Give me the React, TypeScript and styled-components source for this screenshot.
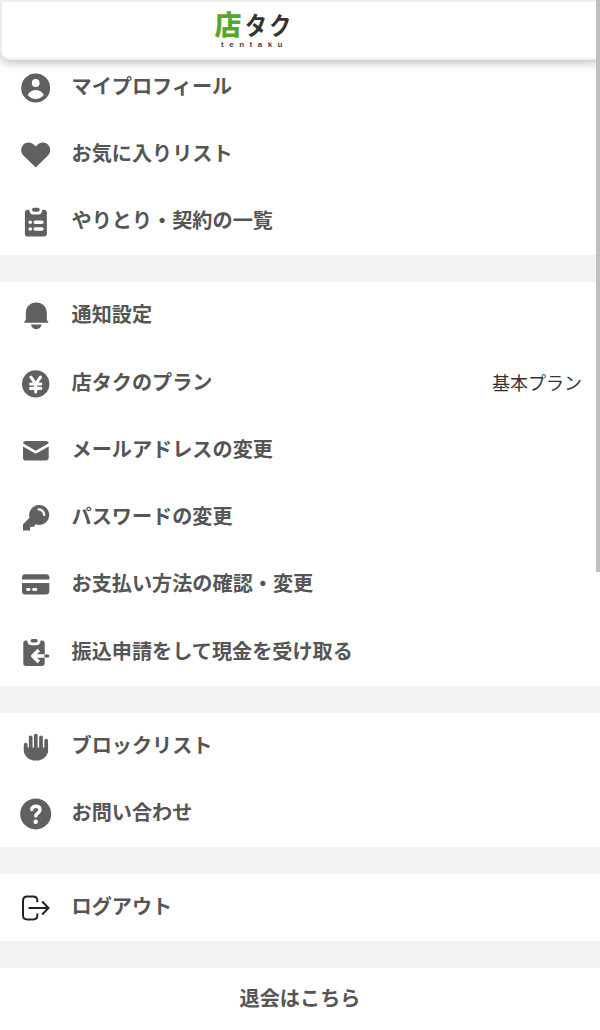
import React from "react";
import styled, { createGlobalStyle } from "styled-components";

const GlobalStyle = createGlobalStyle`
  * { box-sizing: border-box; }
  html, body { margin: 0; height: 1030px; overflow: hidden; background: #fff; }
  body { font-family: "Noto Sans CJK JP", sans-serif; color: #555; }
`;

const Screen = styled.div`
  position: relative;
  width: 600px;
  height: 1030px;
  overflow: hidden;
  display: flex;
  flex-direction: column;
  background: #f2f2f2;
`;

const Header = styled.header`
  position: relative;
  z-index: 1;
  flex: none;
  height: 60px;
  display: flex;
  flex-direction: column;
  align-items: center;
  padding: 8px 97px 0 0;
  background: #fff;
  border: 2px solid #eee;
  border-right: 0;
  border-radius: 0 0 0 9px;
  box-shadow: 0 3px 10px rgba(0, 0, 0, 0.25);
`;

const LogoMark = styled.div`
  display: flex;
  align-items: center;
  width: 76px;
  height: 28px;
  font-weight: 700;
  line-height: 28px;
`;

const LogoKanji = styled.span`
  color: #55a630;
  font-size: 27px;
  font-weight: 900;
`;

const LogoKana = styled.span`
  margin-left: 3px;
  color: #333;
  font-size: 25px;
  letter-spacing: 2.5px;
  white-space: nowrap;
  transform: scaleX(0.88);
  transform-origin: 0 50%;
`;

const LogoLatin = styled.div`
  height: 10px;
  margin-top: 2px;
  padding-left: 4px;
  color: #444;
  font: 700 8px/10px "Liberation Sans", sans-serif;
  letter-spacing: 5.5px;
`;

const Group = styled.section<{ $first?: boolean }>`
  flex: none;
  display: flex;
  flex-direction: column;
  margin-top: ${(p) => (p.$first ? "-6.3px" : "0")};
  margin-bottom: 26.95px;
  background: #fff;
`;

const Row = styled.div`
  display: flex;
  align-items: center;
  height: 67.22px;
  padding: 1px 18px 0 20px;
`;

const Icon = styled.svg`
  flex: none;
  width: 32px;
  height: 32px;
  margin-right: 19.5px;
  color: #606060;
  fill: currentColor;
`;

const Label = styled.span`
  flex: 1;
  padding-bottom: 4px;
  font-size: 20.15px;
  font-weight: 700;
  line-height: 28px;
  white-space: nowrap;
`;

const Value = styled.span`
  padding-bottom: 4px;
  color: #333;
  font-size: 18px;
  line-height: 26px;
`;

const Withdraw = styled.div`
  flex: 1;
  display: flex;
  justify-content: center;
  padding-top: 15.5px;
  background: #fff;
  font-size: 20.15px;
  font-weight: 700;
  line-height: 28px;
`;

const ScrollThumb = styled.div`
  position: absolute;
  z-index: 2;
  top: 0;
  right: 0;
  width: 4.5px;
  height: 571.5px;
  background: #bfbfbf;
`;

const white = { fill: "none", stroke: "#fff", strokeLinecap: "round", strokeLinejoin: "round" } as const;

const icons = {
  profile: (
    <>
      <circle cx="15.7" cy="15.9" r="14.5" />
      <circle cx="15.7" cy="11" r="3.9" fill="#fff" />
      <path d="M7.6 23.1c1.8-3.600 4.800-5.200 8.100-5.200s6.300 1.600 8.100 5.200c-2.200 2.500-5 3.900-8.100 3.900s-5.900-1.400-8.100-3.900z" fill="#fff" />
    </>
  ),
  heart: <path d="M15.7 28.600 3.7 16.800C.2 13.300.6 8.500 3.300 5.700c3.300-3.200 8.700-2.900 12.400 1.700 3.700-4.600 9.100-4.900 12.400-1.700 2.700 2.800 3.100 7.600-.4 11.100z" />,
  clipboard: (
    <>
      <path d="M7.500 3.700h1.800c.2 3 1.500 4.800 3.600 4.800h5.800c2.100 0 3.400-1.800 3.600-4.800h1.800c1.600 0 2.800 1.200 2.800 2.800v21.200c0 1.600-1.200 2.800-2.800 2.800H7.700A2.800 2.800 0 0 1 4.900 27.700V6.500c0-1.600 1-2.800 2.600-2.800z" />
      <rect x="12" y="1.7" width="7.7" height="4" rx="2" />
      <path d="M10.200 16.300h.1M15.200 16.300h6.700M10.200 23.100h.1M15.200 23.100h6.700" {...white} strokeWidth="3.5" />
    </>
  ),
  bell: (
    <>
      <path d="M16.300 2.600c6.200 0 10.500 4.400 10.500 10.300v7l1.500 1.800v1H4.300v-1l1.500-1.800v-7C5.800 7 10.100 2.600 16.300 2.600z" />
      <path d="M11 24.600h10.600c-.5 2.900-2.600 4.600-5.300 4.600s-4.800-1.700-5.300-4.600z" />
    </>
  ),
  yen: (
    <>
      <circle cx="15.7" cy="15.9" r="13.7" />
      <path d="m10.900 9.200 4.800 6.600 4.800-6.600M15.700 16v8M10.600 16h10.200M10.600 20.400h10.200" {...white} strokeWidth="3.1" />
    </>
  ),
  mail: (
    <>
      <path d="M5.600 5.900h20.500c1.400 0 2.600 1 2.600 2.400l-12.900 7.400L3 8.300c0-1.400 1.200-2.400 2.600-2.400z" />
      <path d="m3 11.500 12.800 7.300 12.900-7.300v11.200c0 1.600-1.200 2.800-2.800 2.800H5.800A2.800 2.800 0 0 1 3 22.700z" />
    </>
  ),
  key: (
    <>
      <path d="M18.700 3.100a9.900 9.900 0 1 1-2.800 19.200l-2.200 2.500h-2.900l-.8.800v2.900H3v-6.200l6.500-6.600A9.900 9.900 0 0 1 18.700 3.100z" />
      <path d="M18.700 7.300c3.100.3 5.100 2.400 5.500 5.500" {...white} strokeWidth="2.3" />
    </>
  ),
  card: (
    <>
      <path d="M5 5.300h21.300c1.700 0 3 1.300 3 3v2.200H2V8.300c0-1.700 1.300-3 3-3z" />
      <path d="M2 14h27.300v8.600c0 1.700-1.300 3-3 3H5c-1.700 0-3-1.300-3-3z" />
      <path d="M7.600 20.500h1.500M13.600 20.500h2.300" {...white} strokeWidth="2.9" />
    </>
  ),
  transfer: (
    <>
      <path d="M5.500 3.600h1.700c.2 3 1.500 4.600 3.500 4.600h6.400c2 0 3.300-1.600 3.500-4.600h1.500c1.600 0 2.600 1.200 2.600 2.700v20c0 1.500-1.200 2.700-2.700 2.700H6a2.700 2.700 0 0 1-2.700-2.700v-20c0-1.500.8-2.700 2.200-2.700z" />
      <rect x="10.5" y="1.9" width="7.2" height="3.7" rx="1.8" />
      <path d="M24.700 19H13M18.800 13 12.800 19l6 6" {...white} strokeWidth="3.6" strokeLinecap="butt" />
      <path d="M24.700 17.500h3.100a1.500 1.500 0 0 1 0 3h-3.100z" />
    </>
  ),
  hand: (
    <>
      <path d="M5.700 13.700v7M10.700 6.300v14M15.800 4.500v16M21 6.300v14M26.200 9.600v11" fill="none" stroke="currentColor" strokeWidth="3.7" strokeLinecap="round" />
      <path d="M3.850 16.500h24.200v2c0 6.800-5 11.100-12.100 11.100s-12.100-4.300-12.100-11.100z" />
    </>
  ),
  help: (
    <>
      <circle cx="15.7" cy="15.9" r="15.5" />
      <path d="M11.700 11.500c.5-2.200 2-3.200 4-3.200 2.600 0 4.300 1.500 4.300 3.700 0 3.100-4.200 3.200-4.200 6.100" {...white} strokeWidth="3.4" />
      <circle cx="15.7" cy="23.8" r="2.3" fill="#fff" />
    </>
  ),
  logout: (
    <path
      d="M17.300 10.300V8.800c0-2.600-1.500-4.300-4.100-4.300H7.400C4.800 4.500 3 6.300 3 8.900v14.300c0 2.600 1.800 4.200 4.400 4.200h5.800c2.600 0 4.100-1.700 4.100-4.200v-1.800M8.500 16h20M22.200 9.500l6.300 6.500-6.300 6.500"
      fill="none"
      stroke="#222"
      strokeWidth="2"
    />
  ),
};

type Item = { icon: keyof typeof icons; label: string; value?: string };

const groups: Item[][] = [
  [
    { icon: "profile", label: "マイプロフィール" },
    { icon: "heart", label: "お気に入りリスト" },
    { icon: "clipboard", label: "やりとり・契約の一覧" },
  ],
  [
    { icon: "bell", label: "通知設定" },
    { icon: "yen", label: "店タクのプラン", value: "基本プラン" },
    { icon: "mail", label: "メールアドレスの変更" },
    { icon: "key", label: "パスワードの変更" },
    { icon: "card", label: "お支払い方法の確認・変更" },
    { icon: "transfer", label: "振込申請をして現金を受け取る" },
  ],
  [
    { icon: "hand", label: "ブロックリスト" },
    { icon: "help", label: "お問い合わせ" },
  ],
  [{ icon: "logout", label: "ログアウト" }],
];

export default function App() {
  return (
    <Screen lang="ja">
      <GlobalStyle />
      <Header>
        <LogoMark>
          <LogoKanji>店</LogoKanji>
          <LogoKana>タク</LogoKana>
        </LogoMark>
        <LogoLatin>tentaku</LogoLatin>
      </Header>
      {groups.map((items, i) => (
        <Group key={i} $first={i === 0}>
          {items.map((item) => (
            <Row key={item.label}>
              <Icon viewBox="0 0 32 32">{icons[item.icon]}</Icon>
              <Label>{item.label}</Label>
              {item.value && <Value>{item.value}</Value>}
            </Row>
          ))}
        </Group>
      ))}
      <Withdraw>退会はこちら</Withdraw>
      <ScrollThumb />
    </Screen>
  );
}
